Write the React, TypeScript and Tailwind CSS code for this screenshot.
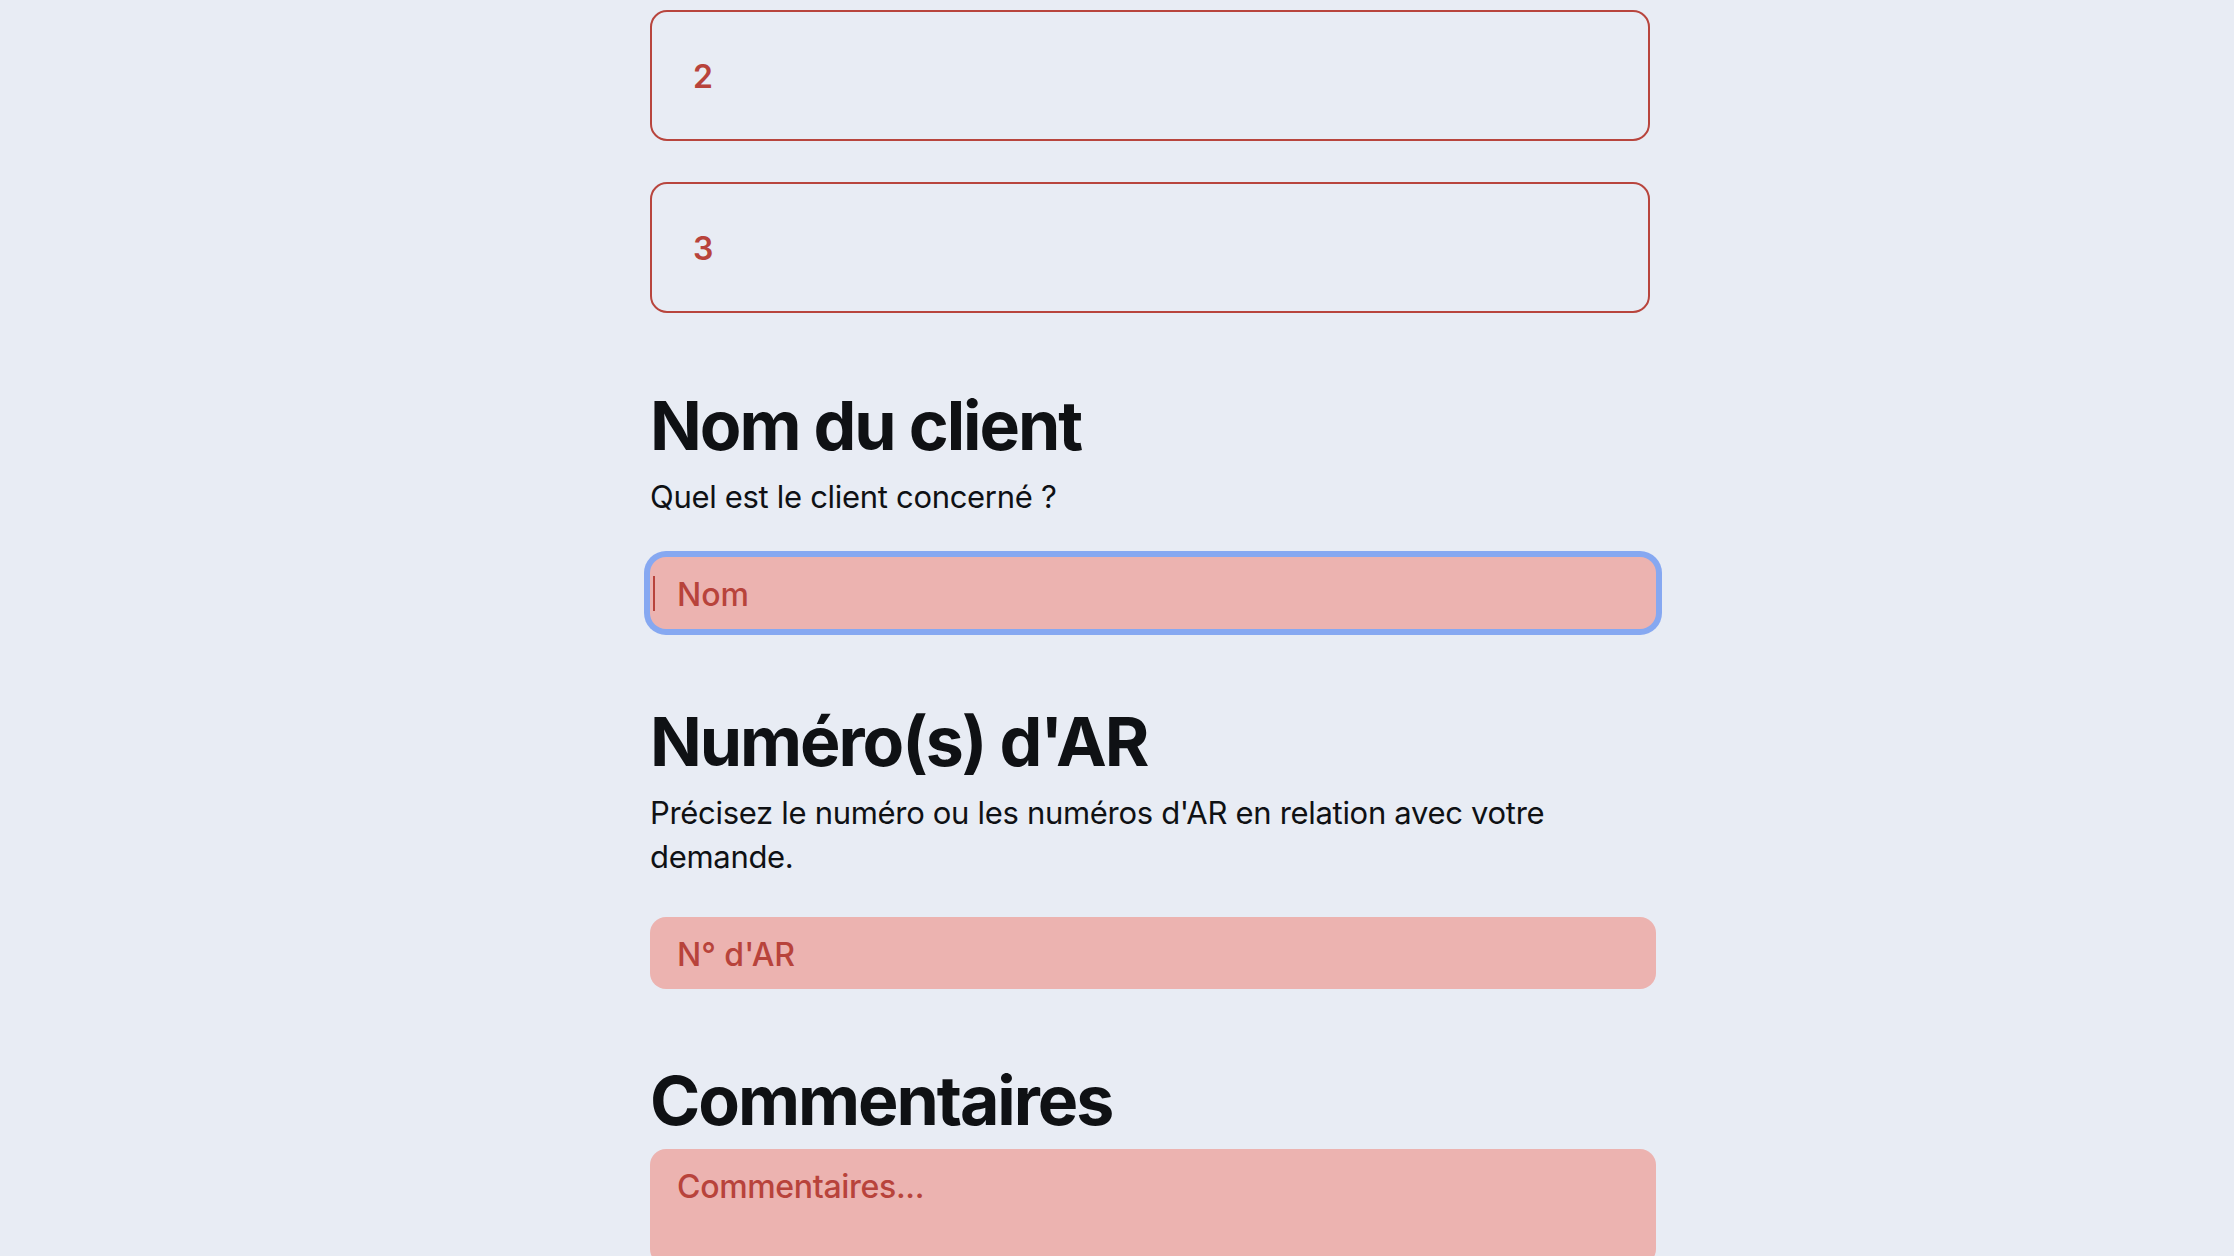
export default function App() {
  const field =
    "block w-[1006px] h-[72px] rounded-[16px] bg-[#ecb3b0] px-[27px] text-[32px] font-medium text-[#b8433b] placeholder:text-[#b8433b] outline-none";
  const heading = "text-[68px] font-bold leading-[68px] tracking-[-0.03em]";
  const desc = "mt-[16px] text-[31px] leading-[44px] tracking-[-0.01em]";

  return (
    <div className="min-h-screen bg-[#e8ecf4] font-['Inter','Noto_Sans',sans-serif] text-[#0f1114]">
      <div className="ml-[650px] w-[1006px] pt-[10px]">
        {/* options already added */}
        <div className="flex flex-col gap-[41px]">
          {["2", "3"].map((n) => (
            <div
              key={n}
              className="flex h-[131px] w-[1000px] items-center rounded-[17px] border-2 border-[#b8453d] px-[41px] pt-[3px] text-[32px] font-semibold text-[#b8433b]"
            >
              {n}
            </div>
          ))}
        </div>

        <section className="mt-[78px]">
          <h2 className={heading}>Nom du client</h2>
          <p className={desc}>Quel est le client concerné ?</p>
          <div className="relative mt-[38px]">
            <input
              type="text"
              placeholder="Nom"
              className={field + " pt-[2px] ring-[6px] ring-[#86a8f1]"}
            />
            <span className="pointer-events-none absolute left-[3px] top-[19px] h-[35px] w-[2px] bg-[#b8433b]" />
          </div>
        </section>

        <section className="mt-[78px]">
          <h2 className={heading}>Numéro(s) d'AR</h2>
          <p className={desc}>
            Précisez le numéro ou les numéros d'AR en relation avec votre demande.
          </p>
          <input type="text" placeholder="N° d'AR" className={field + " mt-[38px] pt-[2px]"} />
        </section>

        <section className="mt-[77px]">
          <h2 className={heading}>Commentaires</h2>
          <textarea
            placeholder="Commentaires..."
            className="mt-[15px] block h-[116px] w-[1006px] rounded-[16px] bg-[#ecb3b0] px-[27px] pt-[14px] text-[32px] font-medium leading-[48px] tracking-[-0.01em] text-[#b8433b] placeholder:text-[#b8433b] outline-none"
          />
        </section>
      </div>
    </div>
  );
}
